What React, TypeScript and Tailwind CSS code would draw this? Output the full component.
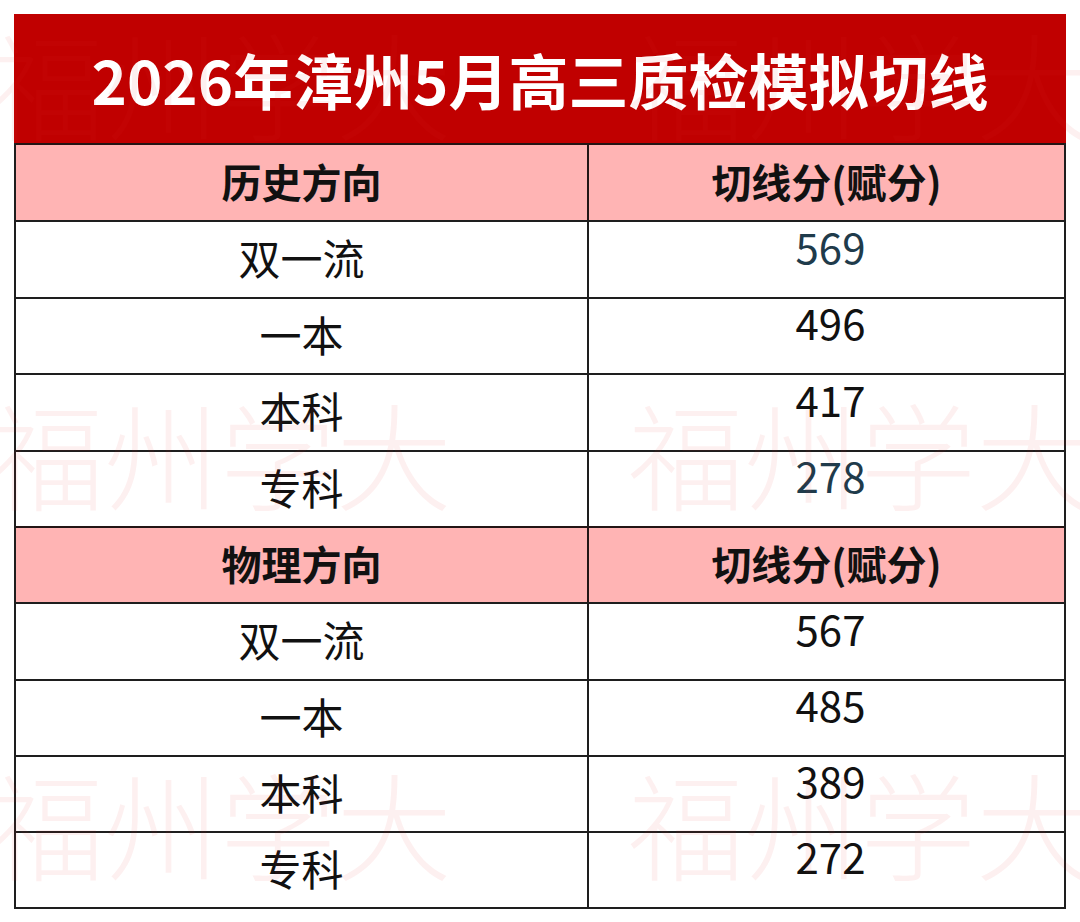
import React from 'react';

type Row = { label: string; score: string; tint?: boolean };

const history: Row[] = [
  { label: '双一流', score: '569', tint: true },
  { label: '一本', score: '496' },
  { label: '本科', score: '417' },
  { label: '专科', score: '278', tint: true },
];

const physics: Row[] = [
  { label: '双一流', score: '567' },
  { label: '一本', score: '485' },
  { label: '本科', score: '389' },
  { label: '专科', score: '272' },
];

const font = "font-['Microsoft_YaHei','Noto_Sans_CJK_SC',sans-serif]";

const SectionHead: React.FC<{ title: string; h: string }> = ({ title, h }) => (
  <div className={`grid grid-cols-[573px_1fr] border-t-2 border-[#231515] bg-[#ffb4b4] ${h}`}>
    <div className="flex items-center justify-center border-r-2 border-[#231515] pb-1 text-[40px] font-bold text-[#111]">
      {title}
    </div>
    <div className="flex items-center justify-center pb-1 text-[40px] font-bold text-[#111]">切线分(赋分)</div>
  </div>
);

const DataRow: React.FC<{ row: Row; h: string }> = ({ row, h }) => (
  <div className={`grid grid-cols-[573px_1fr] border-t-2 border-[#1e1e1e] ${h}`}>
    <div className="flex items-center justify-center border-r-2 border-[#1e1e1e] pb-[6px] text-[42px] text-[#111]">
      {row.label}
    </div>
    <div
      className={`flex items-center justify-center pb-[28px] pl-2 text-[42px] leading-none ${row.tint ? 'text-[#1f3b4b]' : 'text-[#111]'}`}
    >
      {row.score}
    </div>
  </div>
);

const Watermark: React.FC = () => {
  const spots = [
    { top: 6, left: -12 },
    { top: 6, left: 628 },
    { top: 376, left: -12 },
    { top: 376, left: 628 },
    { top: 746, left: -12 },
    { top: 746, left: 628 },
  ];
  return (
    <div aria-hidden className="pointer-events-none absolute inset-0 overflow-hidden">
      {spots.map((s, i) => (
        <span
          key={i}
          className="absolute whitespace-nowrap text-[116px] leading-[150px] font-light text-[rgba(225,40,40,0.07)]"
          style={{ top: s.top, left: s.left }}
        >
          福州学大
        </span>
      ))}
    </div>
  );
};

export default function App() {
  const h1 = ['h-[77px]', 'h-[76px]', 'h-[77px]', 'h-[76px]'];
  const h2 = ['h-[77px]', 'h-[76px]', 'h-[76px]', 'h-[76px]'];
  return (
    <div className={`relative h-[922px] w-[1080px] overflow-hidden bg-white ${font}`}>
      <div className="ml-[14px] pt-[14px] w-[1052px]">
        <div className="flex h-[129px] items-center justify-center bg-[#c00000] text-[60px] font-bold text-white">
          2026年漳州5月高三质检模拟切线
        </div>
        <div className="border-x-2 border-b-2 border-[#1e1e1e]">
          <SectionHead title="历史方向" h="h-[77px]" />
          {history.map((r, i) => (
            <DataRow key={'h' + i} row={r} h={h1[i]} />
          ))}
          <SectionHead title="物理方向" h="h-[76px]" />
          {physics.map((r, i) => (
            <DataRow key={'p' + i} row={r} h={h2[i]} />
          ))}
        </div>
      </div>
      <Watermark />
    </div>
  );
}
